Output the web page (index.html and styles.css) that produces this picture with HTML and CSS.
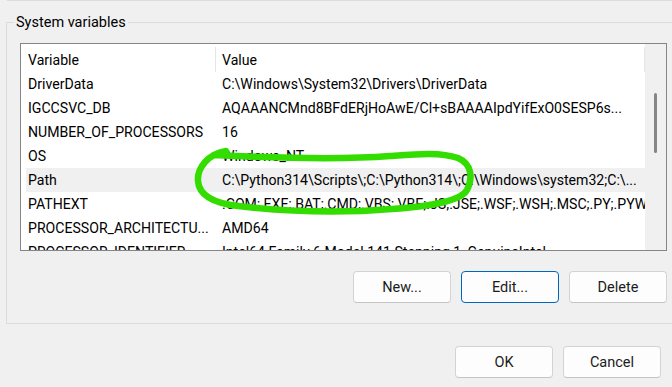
FILE: index.html
```html
<!DOCTYPE html>
<html lang="en">
<head>
  <meta charset="UTF-8" />
  <meta name="viewport" content="width=device-width, initial-scale=1.0"/>
  <title>Environment Variables</title>
  <link rel="stylesheet" href="styles.css">
</head>
<body>
  <div class="prev-group"></div>

  <div class="group">
    <span class="legend">System variables</span>

    <div class="inner">
      <div class="listview">
        <div class="list">
          <div class="header">
            <div class="hcell name">Variable</div>
            <div class="hcell value">Value</div>
          </div>
          <div class="row"><div class="name">DriverData</div><div class="value">C:\Windows\System32\Drivers\DriverData</div></div>
          <div class="row"><div class="name">IGCCSVC_DB</div><div class="value">AQAAANCMnd8BFdERjHoAwE/Cl+sBAAAAIpdYifExO0SESP6s...</div></div>
          <div class="row"><div class="name">NUMBER_OF_PROCESSORS</div><div class="value">16</div></div>
          <div class="row"><div class="name">OS</div><div class="value">Windows_NT</div></div>
          <div class="row selected"><div class="name">Path</div><div class="value">C:\Python314\Scripts\;C:\Python314\;C:\Windows\system32;C:\...</div></div>
          <div class="row"><div class="name">PATHEXT</div><div class="value">.COM;.EXE;.BAT;.CMD;.VBS;.VBE;.JS;.JSE;.WSF;.WSH;.MSC;.PY;.PYW</div></div>
          <div class="row"><div class="name">PROCESSOR_ARCHITECTU...</div><div class="value">AMD64</div></div>
          <div class="row"><div class="name">PROCESSOR_IDENTIFIER</div><div class="value">Intel64 Family 6 Model 141 Stepping 1, GenuineIntel</div></div>
        </div>
        <div class="scrollbar">
          <div class="thumb"></div>
        </div>
      </div>

      <div class="actions">
        <button class="btn">New...</button>
        <button class="btn default">Edit...</button>
        <button class="btn">Delete</button>
      </div>
    </div>
  </div>

  <div class="footer">
    <button class="btn">OK</button>
    <button class="btn">Cancel</button>
  </div>

  <!-- hand-drawn marker around the Path row -->
  <svg class="marker" width="672" height="387" viewBox="0 0 672 387">
    <path d="M226 151 C208 154, 197 168, 198 181 C199 195, 212 203, 238 206 C290 212, 345 213, 392 209 C432 206, 461 201, 467 190 C473 178, 472 164, 458 158 C440 152, 418 154, 390 156 C340 160, 275 158, 214 155"
          fill="none" stroke="#33dd00" stroke-width="6.5" stroke-linecap="round" stroke-linejoin="round"/>
  </svg>
</body>
</html>
```

FILE: styles.css
```css
body {
  margin: 0;
  width: 672px;
  height: 387px;
  overflow: hidden;
  position: relative;
  background: #f0f0f0;
  font-family: 'Segoe UI', Roboto, sans-serif;
  font-size: 14.1px;
  color: #000;
}

.prev-group {
  height: 0;
  margin-left: 7px;
  border-bottom: 1px solid #dcdcdc;
}

.group {
  position: relative;
  margin: 21px 0 0 6px;
  width: 720px;
  height: 300px;
  border: 1px solid #dcdcdc;
}

.legend {
  position: absolute;
  top: -10px;
  left: 7px;
  padding: 0 2px;
  line-height: 20px;
  background: #f0f0f0;
  font-size: 14.5px;
}

.inner {
  width: 647px;
  padding: 20px 0 0 13px;
}

.listview {
  display: flex;
  height: 206px;
  border: 1px solid #858585;
  background: #fff;
  overflow: hidden;
}

.list {
  flex: 1;
  padding-left: 5px;
  overflow: hidden;
}

.header {
  display: flex;
  padding-top: 3px;
  height: 25px;
}

.hcell {
  line-height: 26px;
  border-right: 1px solid #e5e5e5;
}

.name {
  width: 187px;
  padding-left: 2px;
  flex-shrink: 0;
  white-space: nowrap;
  overflow: hidden;
}

.value {
  flex: 1;
  padding-left: 6px;
  white-space: nowrap;
  overflow: hidden;
}

.row {
  display: flex;
  height: 24px;
  line-height: 25px;
}

.row .name {
  width: 188px;
}

.row.selected {
  background: #f0f0f0;
}

.scrollbar {
  width: 21px;
  background: #f0f0f0;
  position: relative;
}

.thumb {
  position: absolute;
  left: 9px;
  top: 49px;
  width: 3px;
  height: 60px;
  border-radius: 2px;
  background: #858585;
}

.actions {
  display: flex;
  justify-content: flex-end;
  gap: 10px;
  margin-top: 20px;
}

.btn {
  width: 98px;
  height: 32px;
  padding: 0;
  background: #fdfdfd;
  border: 1px solid #d3d3d3;
  border-bottom-color: #c4c4c4;
  border-radius: 4px;
  font-family: inherit;
  font-size: 14.5px;
  color: #1b1b1b;
}

.btn.default {
  border-color: #0067c0;
}

.footer {
  display: flex;
  justify-content: flex-end;
  gap: 10px;
  margin-top: 22px;
  padding-right: 11px;
}

.marker {
  position: absolute;
  top: 0;
  left: 0;
  pointer-events: none;
}
```
